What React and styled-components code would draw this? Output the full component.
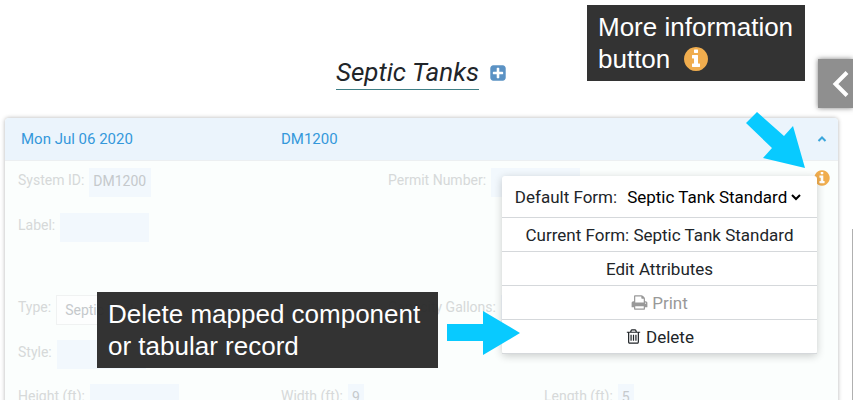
import React from "react";
import styled, { createGlobalStyle } from "styled-components";

const GlobalStyle = createGlobalStyle`
  * {
    box-sizing: border-box;
  }
  body {
    margin: 0;
    background: #fff;
    color: #212529;
    font-family: Roboto, "Liberation Sans", sans-serif;
  }
  button, input, select {
    margin: 0;
    font-family: inherit;
  }
`

const Page = styled.div`
  position: relative;
  height: 100vh;
  overflow: hidden;
  padding: 56px 15px 0 5px;
`

const TitleBar = styled.header`
  display: flex;
  justify-content: center;
  align-items: center;
  gap: 10px;
  margin-bottom: 28px;
`

const Title = styled.h1`
  margin: 0;
  border-bottom: 1px solid #3f7f86;
  font-size: 26px;
  font-style: italic;
  font-weight: 400;
  line-height: 33px;
`

const IconButton = styled.button`
  display: flex;
  padding: 0;
  border: 0;
  background: none;
  color: ${props => props.$color};
  cursor: pointer;
`

const Icon = styled.svg`
  width: ${props => props.$size || 18}px;
  height: ${props => props.$size || 18}px;
  fill: currentColor;
  flex: none;
`

const Card = styled.section`
  border-radius: 4px;
  box-shadow: 0 0 4px rgba(0, 0, 0, .3);
`

const CardHeader = styled.button`
  display: grid;
  grid-template-columns: 260px 1fr auto;
  align-items: center;
  width: 100%;
  height: 43px;
  padding: 0 10px 0 16px;
  border: 0;
  border-bottom: 1px solid #eceff1;
  border-radius: 4px 4px 0 0;
  background: #ebf4fc;
  color: #3498db;
  font-size: 15px;
  text-align: left;
  cursor: pointer;
`

const CardBody = styled.div`
  position: relative;
  min-height: 280px;
  padding: 7px 13px;
  background: #fbfefd;
`

const Row = styled.div`
  display: grid;
  grid-template-columns: ${props => props.$columns};
  margin-bottom: ${props => props.$gap || 16}px;
`

const Field = styled.label`
  display: flex;
  gap: 5px;
  color: #d6d9d9;
  font-size: 14px;
  line-height: 25px;
`

const FieldInput = styled.input`
  width: ${props => props.$width || 89}px;
  height: 29px;
  padding: 0 4px 4px;
  border: 0;
  background: #f2f8fd;
  color: #c5c9cc;
  font-size: 14px;
`

const FieldSelect = styled.select`
  appearance: none;
  width: 160px;
  height: 30px;
  padding: 0 8px;
  border: 1px solid #f0f2f2;
  background: #fdfefe;
  color: #c5c9cc;
  font-size: 14px;
`

const InfoSpot = styled.div`
  position: absolute;
  top: 8px;
  right: 7px;
`

const Menu = styled.div`
  position: absolute;
  top: 15px;
  right: 21px;
  width: 315px;
  border-radius: 3px;
  background: #fff;
  box-shadow: 0 2px 8px rgba(0, 0, 0, .2);
  font-size: 17px;
`

const MenuForm = styled.label`
  display: flex;
  align-items: center;
  justify-content: center;
  gap: 6px;
  height: 42px;
  border-bottom: 1px solid #d5d8db;
`

const MenuSelect = styled.select`
  border: 0;
  background: #fff;
  color: #000;
  font-size: 17px;
`

const MenuItem = styled.button`
  display: flex;
  align-items: center;
  justify-content: center;
  gap: 4px;
  width: 100%;
  height: 34px;
  padding: 0;
  border: 0;
  border-bottom: 1px solid #d5d8db;
  background: none;
  color: #212529;
  font-size: 17px;
  cursor: pointer;

  &:disabled {
    color: #999;
    cursor: default;
  }
`

const DrawerTab = styled.button`
  position: absolute;
  top: 59px;
  right: 0;
  display: flex;
  align-items: center;
  justify-content: flex-end;
  width: 35px;
  height: 49px;
  padding: 0 4px 0 0;
  border: 0;
  background: #8f8f8f;
  box-shadow: 0 0 5px rgba(0, 0, 0, .5);
  cursor: pointer;
`

const ScrollEdge = styled.div`
  position: absolute;
  top: 229px;
  right: 0;
  bottom: 0;
  width: 1px;
  background: #b0b0b0;
`

const Callout = styled.div`
  position: absolute;
  top: ${props => props.$top}px;
  left: ${props => props.$left}px;
  min-width: ${props => props.$width}px;
  padding: 6px 11px;
  background: rgba(40, 40, 40, .95);
  color: #fff;
  font-family: "Liberation Sans", Arial, sans-serif;
  font-size: 26px;
  line-height: 32px;
  white-space: nowrap;
`

const CalloutLine = styled.div`
  display: flex;
  align-items: center;
  gap: 12px;
`

const Arrow = styled.svg`
  position: absolute;
  top: ${props => props.$top}px;
  left: ${props => props.$left}px;
  fill: #08caff;
  pointer-events: none;
`

const InfoIcon = ({ size }) => (
  <Icon viewBox="0 0 1792 1792" $size={size} aria-hidden="true">
    <circle cx="896" cy="896" r="700" fill="#fff" />
    <path d="M1152 1376v-160q0-14-9-23t-23-9h-96v-512q0-14-9-23t-23-9h-320q-14 0-23 9t-9 23v160q0 14 9 23t23 9h96v320h-96q-14 0-23 9t-9 23v160q0 14 9 23t23 9h448q14 0 23-9t9-23zm-128-896v-160q0-14-9-23t-23-9h-192q-14 0-23 9t-9 23v160q0 14 9 23t23 9h192q14 0 23-9t9-23zm640 416q0 209-103 385.5t-279.5 279.5-385.5 103-385.5-103-279.5-279.5-103-385.5 103-385.5 279.5-279.5 385.5-103 385.5 103 279.5 279.5 103 385.5z" />
  </Icon>
)

const PlusIcon = () => (
  <Icon viewBox="0 0 1792 1792" aria-hidden="true">
    <path d="M1408 960v-128q0-26-19-45t-45-19h-320v-320q0-26-19-45t-45-19h-128q-26 0-45 19t-19 45v320h-320q-26 0-45 19t-19 45v128q0 26 19 45t45 19h320v320q0 26 19 45t45 19h128q26 0 45-19t19-45v-320h320q26 0 45-19t19-45zm256-544v960q0 119-84.5 203.5t-203.5 84.5h-960q-119 0-203.5-84.5t-84.5-203.5v-960q0-119 84.5-203.5t203.5-84.5h960q119 0 203.5 84.5t84.5 203.5z" />
  </Icon>
)

const PrintIcon = () => (
  <Icon viewBox="0 0 1792 1792" $size={17} aria-hidden="true">
    <path d="M448 1536h896v-256h-896v256zm0-640h896v-384h-160q-40 0-68-28t-28-68v-160h-640v640zm1152 64q0-26-19-45t-45-19-45 19-19 45 19 45 45 19 45-19 19-45zm128 0v416q0 13-9.5 22.5t-22.5 9.5h-224v160q0 40-28 68t-68 28h-960q-40 0-68-28t-28-68v-160h-224q-13 0-22.5-9.5t-9.5-22.5v-416q0-79 56.5-135.5t135.5-56.5h64v-544q0-40 28-68t68-28h672q40 0 88 20t76 48l152 152q28 28 48 76t20 88v256h64q79 0 135.5 56.5t56.5 135.5z" />
  </Icon>
)

const TrashIcon = () => (
  <Icon viewBox="0 0 1792 1792" $size={17} aria-hidden="true">
    <path d="M704 736v576q0 14-9 23t-23 9h-64q-14 0-23-9t-9-23v-576q0-14 9-23t23-9h64q14 0 23 9t9 23zm256 0v576q0 14-9 23t-23 9h-64q-14 0-23-9t-9-23v-576q0-14 9-23t23-9h64q14 0 23 9t9 23zm256 0v576q0 14-9 23t-23 9h-64q-14 0-23-9t-9-23v-576q0-14 9-23t23-9h64q14 0 23 9t9 23zm128 724v-948h-896v948q0 22 7 40.5t14.5 27 10.5 8.5h832q3 0 10.5-8.5t14.5-27 7-40.5zm-672-1076h448l-48-117q-7-9-17-11h-317q-10 2-17 11zm928 32v64q0 14-9 23t-23 9h-96v948q0 83-47 143.5t-113 60.5h-832q-66 0-113-58.5t-47-141.5v-952h-96q-14 0-23-9t-9-23v-64q0-14 9-23t23-9h309l70-167q15-37 54-63t79-26h320q40 0 79 26t54 63l70 167h309q14 0 23 9t9 23z" />
  </Icon>
)

const TextField = ({ label, value = "", width }) => (
  <Field>
    {label}
    <FieldInput type="text" defaultValue={value} $width={width} />
  </Field>
)

const RecordForm = () => (
  <>
    <Row $columns="370px 1fr">
      <TextField label="System ID:" value="DM1200" width={62} />
      <TextField label="Permit Number:" />
    </Row>
    <Row $columns="1fr" $gap={53}>
      <TextField label="Label:" />
    </Row>
    <Row $columns="370px 1fr" $gap={15}>
      <Field>
        Type:
        <FieldSelect defaultValue="Septic Tank">
          <option>Septic Tank</option>
        </FieldSelect>
      </Field>
      <TextField label="Capacity Gallons:" />
    </Row>
    <Row $columns="1fr" $gap={15}>
      <TextField label="Style:" />
    </Row>
    <Row $columns="263px 263px 1fr">
      <TextField label="Height (ft):" />
      <TextField label="Width (ft):" value="9" width={16} />
      <TextField label="Length (ft):" value="5" width={16} />
    </Row>
  </>
)

const RecordMenu = () => (
  <Menu>
    <MenuForm>
      Default Form:
      <MenuSelect defaultValue="Septic Tank Standard">
        <option>Septic Tank Standard</option>
      </MenuSelect>
    </MenuForm>
    <MenuItem type="button">Current Form: Septic Tank Standard</MenuItem>
    <MenuItem type="button">Edit Attributes</MenuItem>
    <MenuItem type="button" disabled>
      <PrintIcon />
      Print
    </MenuItem>
    <MenuItem type="button">
      <TrashIcon />
      Delete
    </MenuItem>
  </Menu>
)

const App = () => {
  return (
    <>
      <GlobalStyle />
      <Page>
        <TitleBar>
          <Title>Septic Tanks</Title>
          <IconButton type="button" $color="#5b92c4" aria-label="Add septic tank">
            <PlusIcon />
          </IconButton>
        </TitleBar>
        <Card>
          <CardHeader type="button" aria-expanded="true">
            <span>Mon Jul 06 2020</span>
            <span>DM1200</span>
            <svg width="12" height="8" viewBox="0 0 12 8" fill="none" stroke="#3aa6dc" strokeWidth="2" aria-hidden="true">
              <path d="M2.5 6 6 2.5 9.5 6" />
            </svg>
          </CardHeader>
          <CardBody>
            <RecordForm />
            <InfoSpot>
              <IconButton type="button" $color="#f0ad4e" aria-label="More information">
                <InfoIcon />
              </IconButton>
            </InfoSpot>
            <RecordMenu />
          </CardBody>
        </Card>

        <DrawerTab type="button" aria-label="Open panel">
          <svg width="17" height="28" viewBox="0 0 17 28" fill="none" stroke="#fff" strokeWidth="4" aria-hidden="true">
            <path d="M15 2.500 3.500 14 15 25.500" />
          </svg>
        </DrawerTab>
        <ScrollEdge />

        <Callout $top={5} $left={587} $width={218}>
          <div>More information</div>
          <CalloutLine>
            button
            <IconButton as="span" $color="#f0ad4e">
              <InfoIcon size={28} />
            </IconButton>
          </CalloutLine>
        </Callout>
        <Arrow $top={112} $left={746} width="60" height="56" viewBox="0 0 60 56" aria-hidden="true">
          <path d="M11 0 38 24 47 14 59 56 17 46 26 36 0 11Z" />
        </Arrow>

        <Callout $top={292} $left={97} $width={341}>
          <div>Delete mapped component</div>
          <div>or tabular record</div>
        </Callout>
        <Arrow $top={311} $left={447} width="73" height="44" viewBox="0 0 73 44" aria-hidden="true">
          <path d="M0 13H36V0L73 22 36 44V30H0Z" />
        </Arrow>
      </Page>
    </>
  );
};

export default App;
